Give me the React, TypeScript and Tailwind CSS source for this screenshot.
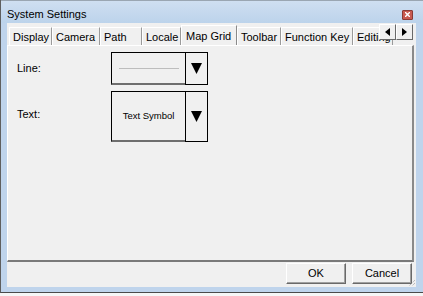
import React from "react";

const tabs = [
  { label: "Display", w: "w-[43px]" },
  { label: "Camera", w: "w-[48px]" },
  { label: "Path", w: "w-[42px]" },
  { label: "Locale", w: "w-[39px]" },
  { label: "Map Grid", w: "w-[56px]", active: true },
  { label: "Toolbar", w: "w-[44px]" },
  { label: "Function Key", w: "w-[72px]" },
  { label: "Editing", w: "w-[40px]" },
];

function Triangle({ dir }: { dir: "down" | "left" | "right" }) {
  if (dir === "down")
    return (
      <svg width="11" height="11" viewBox="0 0 11 11">
        <polygon points="0,0 11,0 5.5,11" fill="#000" />
      </svg>
    );
  if (dir === "left")
    return (
      <svg width="5" height="8" viewBox="0 0 5 8">
        <polygon points="5,0 5,8 0,4" fill="#000" />
      </svg>
    );
  return (
    <svg width="5" height="8" viewBox="0 0 5 8">
      <polygon points="0,0 0,8 5,4" fill="#000" />
    </svg>
  );
}

function Combo({ tall, children }: { tall?: boolean; children: React.ReactNode }) {
  return (
    <div className={`flex w-[97px] ${tall ? "h-[51px]" : "h-[33px]"}`}>
      <div className="flex-1 flex items-center justify-center border-t border-l border-black border-b-2 border-b-[#6e6e6e]">
        {children}
      </div>
      <div className="w-[23px] flex items-center justify-center border border-black">
        <Triangle dir="down" />
      </div>
    </div>
  );
}

function Button({ children }: { children: React.ReactNode }) {
  return (
    <div className="w-[60px] h-[21px] flex items-center justify-center bg-[#f0f0f0] border border-t-white border-l-white border-r-[#696969] border-b-[#696969] shadow-[inset_-1px_-1px_0_#a0a0a0]">
      {children}
    </div>
  );
}

export default function App() {
  return (
    <div className="w-[423px] h-[296px] bg-[#f6f6f6] overflow-hidden font-['Liberation_Sans',Arial,sans-serif] text-[11px] text-black">
      <div className="w-[423px] h-[293px] flex flex-col bg-[#bfd4ec] border-l border-l-[#5f5f5f] border-b border-b-[#4a4a4a]">
        {/* Title bar */}
        <div className="h-[23px] flex items-center pt-[4px] pl-[6px] pr-[10px] bg-gradient-to-b from-[#cfdff1] to-[#bcd3eb] border-t border-t-[#9aa6b2]">
          <span className="flex-1">System Settings</span>
          <div className="w-[11px] h-[10px] mt-[1px] bg-[#c85a50] border border-[#8a3a34] flex items-center justify-center rounded-[1px]">
            <svg width="5" height="5" viewBox="0 0 5 5">
              <path d="M0 0L5 5M5 0L0 5" stroke="#fff" strokeWidth="1.4" />
            </svg>
          </div>
        </div>

        {/* Client area */}
        <div className="flex-1 flex pl-[6px] pr-[7px] pb-[5px]">
          <div className="flex-1 bg-[#f0f0f0] flex flex-col relative">
            {/* Tabs */}
            <div className="h-[22px] flex items-end pl-[2px] pr-[2px] relative overflow-hidden">
              <div className="flex items-end">
                {tabs.map((t) =>
                  t.active ? (
                    <div
                      key={t.label}
                      className={`${t.w} h-[21px] -mb-[1px] relative z-10 bg-[#f0f0f0] border-t border-l border-t-white border-l-white border-r border-r-[#8a8a8a] pl-[4px] pt-[2px] whitespace-nowrap overflow-hidden`}
                    >
                      {t.label}
                    </div>
                  ) : (
                    <div
                      key={t.label}
                      className={`${t.w} shrink-0 h-[18px] bg-[#f0f0f0] border-t border-l border-t-white border-l-white border-r border-r-[#9a9a9a] pl-[3px] pt-[1px] whitespace-nowrap overflow-hidden`}
                    >
                      {t.label}
                    </div>
                  )
                )}
              </div>
              <div className="absolute right-[3px] top-[1px] flex z-20">
                <div className="w-[17px] h-[16px] flex items-center justify-center bg-[#f0f0f0] border border-t-white border-l-white border-r-[#696969] border-b-[#696969]">
                  <Triangle dir="left" />
                </div>
                <div className="w-[17px] h-[16px] flex items-center justify-center bg-[#f0f0f0] border border-t-white border-l-white border-r-[#696969] border-b-[#696969]">
                  <Triangle dir="right" />
                </div>
              </div>
            </div>

            {/* Panel */}
            <div className="w-[407px] h-[217px] border-t border-l border-t-white border-l-white border-r-2 border-b-2 border-r-[#8a8a8a] border-b-[#7a7a7a] pt-[6px] pl-[9px]">
              <div className="grid grid-cols-[94px_97px] gap-y-[6px] items-center">
                <span>Line:</span>
                <Combo>
                  <div className="w-[60px] h-px bg-[#bdbdbd]" />
                </Combo>
                <span className="-mt-[4px]">Text:</span>
                <Combo tall>
                  <span className="text-[9.5px]">Text Symbol</span>
                </Combo>
              </div>
            </div>

            {/* Buttons */}
            <div className="flex justify-end gap-[6px] pt-[1px] pr-[4px]">
              <Button>OK</Button>
              <Button>Cancel</Button>
            </div>

            {/* Size grip */}
            <svg className="absolute right-0 bottom-0" width="9" height="9" viewBox="0 0 9 9">
              <path d="M8 2L2 8M8 5L5 8" stroke="#a0a0a0" strokeWidth="1" strokeDasharray="1 1" />
            </svg>
          </div>
        </div>
      </div>
    </div>
  );
}
